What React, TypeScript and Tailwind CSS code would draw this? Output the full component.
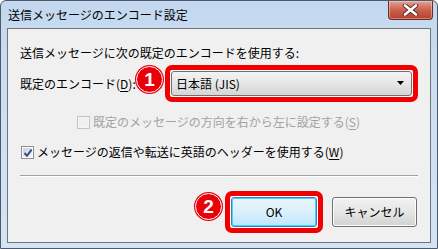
import React from "react";

const FONT = "font-['Meiryo','Noto_Sans_CJK_JP','Noto_Sans',sans-serif]";

function Badge({ n, className }: { n: string; className: string }) {
  return (
    <div
      className={`absolute flex h-[27px] w-[27px] items-center justify-center rounded-full border border-white bg-[#e8000b] text-[19px] font-bold leading-none text-white shadow-[0_0_0_1px_#e8000b] font-['Liberation_Sans',sans-serif] ${className}`}
    >
      <span className="-mt-[1px]">{n}</span>
    </div>
  );
}

function CheckBox({ checked, disabled }: { checked?: boolean; disabled?: boolean }) {
  return (
    <span
      className={`relative flex h-[13px] w-[13px] shrink-0 items-center justify-center border ${
        disabled ? "border-[#c4c4c4] bg-[#f4f4f4]" : "border-[#8e8f8f] bg-white"
      }`}
    >
      <span
        className={`h-[9px] w-[9px] ${
          disabled ? "bg-[#f0f0f0]" : "bg-gradient-to-br from-[#cbcfd5] to-[#f6f6f6]"
        }`}
      />
      {checked && (
        <svg className="absolute left-[1px] top-[1px]" width="10" height="10" viewBox="0 0 10 10">
          <path d="M1.5 5 L4 7.8 L8.6 1.6" fill="none" stroke="#2c4a8c" strokeWidth="1.9" />
        </svg>
      )}
    </span>
  );
}

function Label({ text, k }: { text: string; k: string }) {
  return (
    <span>
      {text}(<span className="underline underline-offset-2">{k}</span>)
    </span>
  );
}

export default function App() {
  return (
    <div
      className={`relative flex h-[249px] w-[438px] flex-col overflow-hidden rounded-t-[6px] border border-[#4c5a6a] bg-gradient-to-b from-[#c3d8ef] via-[#cfe0f3] to-[#d4e4f5] text-[12px] text-black ${FONT}`}
    >
      {/* title bar */}
      <div className="flex h-[27px] shrink-0 items-center justify-between pl-[7px]">
        <span className="leading-none">送信メッセージのエンコード設定</span>
        <div className="mr-[4px] -mt-[9px] flex h-[19px] w-[45px] items-center justify-center rounded-b-[4px] border border-t-0 border-[#6b2d25] bg-gradient-to-b from-[#e3a293] via-[#cc5f4d] to-[#b8402e] shadow-[inset_0_0_0_1px_rgba(255,255,255,0.35)]">
          <svg width="17" height="12" viewBox="0 0 17 12">
            <path d="M3 1.5 L14 10.5 M14 1.5 L3 10.5" stroke="#5a2a24" strokeWidth="4.4" strokeLinecap="round" />
            <path d="M3 1.5 L14 10.5 M14 1.5 L3 10.5" stroke="#ffffff" strokeWidth="2.6" strokeLinecap="round" />
          </svg>
        </div>
      </div>

      {/* client area */}
      <div className="relative mx-[6px] h-[215px] border border-[#6f7479] bg-[#f0f0f0] pl-[12px] pr-[12px]">
        <div className="mt-[16px] h-[16px] leading-[16px]">送信メッセージに次の既定のエンコードを使用する:</div>

        <div className="mt-[4px] flex h-[37px] items-center">
          <span className="w-[145px] shrink-0">
            <Label text="既定のエンコード" k="D" />:
          </span>
          <div className="flex h-[37px] flex-1 rounded-[7px] border-[5px] border-[#f00000] bg-white p-[1px]">
            <div className="flex flex-1 items-center justify-between rounded-[3px] border border-[#707070] bg-gradient-to-b from-[#f3f3f3] via-[#e6e6e6] to-[#d5d5d5] pl-[4px] pr-[6px]">
              <span className="pt-[1px]">日本語 (JIS)</span>
              <svg width="8" height="5" viewBox="0 0 8 5">
                <path d="M0 0 H7 L3.5 4 Z" fill="#000" />
              </svg>
            </div>
          </div>
        </div>

        <div className="ml-[57px] mt-[12px] flex h-[16px] items-center gap-[3px] text-[#a2a2a2]">
          <CheckBox disabled />
          <Label text="既定のメッセージの方向を右から左に設定する" k="S" />
        </div>

        <div className="ml-[1px] mt-[14px] flex h-[16px] items-center gap-[3px]">
          <CheckBox checked />
          <Label text="メッセージの返信や転送に英語のヘッダーを使用する" k="W" />
        </div>

        <div className="mt-[15px] h-[2px] border-t border-b border-t-[#a0a0a0] border-b-white" />

        <div className="mt-[14px] flex items-center justify-end pr-[1px]">
          <div className="rounded-[7px] border-[5px] border-[#f00000] bg-white p-[1px]">
            <button className="flex h-[30px] w-[86px] items-center justify-center rounded-[3px] border border-[#3c7fb1] bg-gradient-to-b from-[#eaf6fd] via-[#d9f0fc] to-[#bee6fd] shadow-[inset_0_0_0_1px_#48d2fd]">
              OK
            </button>
          </div>
          <button className="ml-[9px] flex h-[30px] w-[85px] items-center justify-center rounded-[3px] border border-[#707070] bg-gradient-to-b from-[#f2f2f2] via-[#e6e6e6] to-[#d2d2d2] shadow-[inset_0_0_0_1px_#fcfcfc]">
            キャンセル
          </button>
        </div>
      </div>

      <Badge n="1" className="left-[135px] top-[65px]" />
      <Badge n="2" className="left-[194px] top-[192px]" />
    </div>
  );
}
